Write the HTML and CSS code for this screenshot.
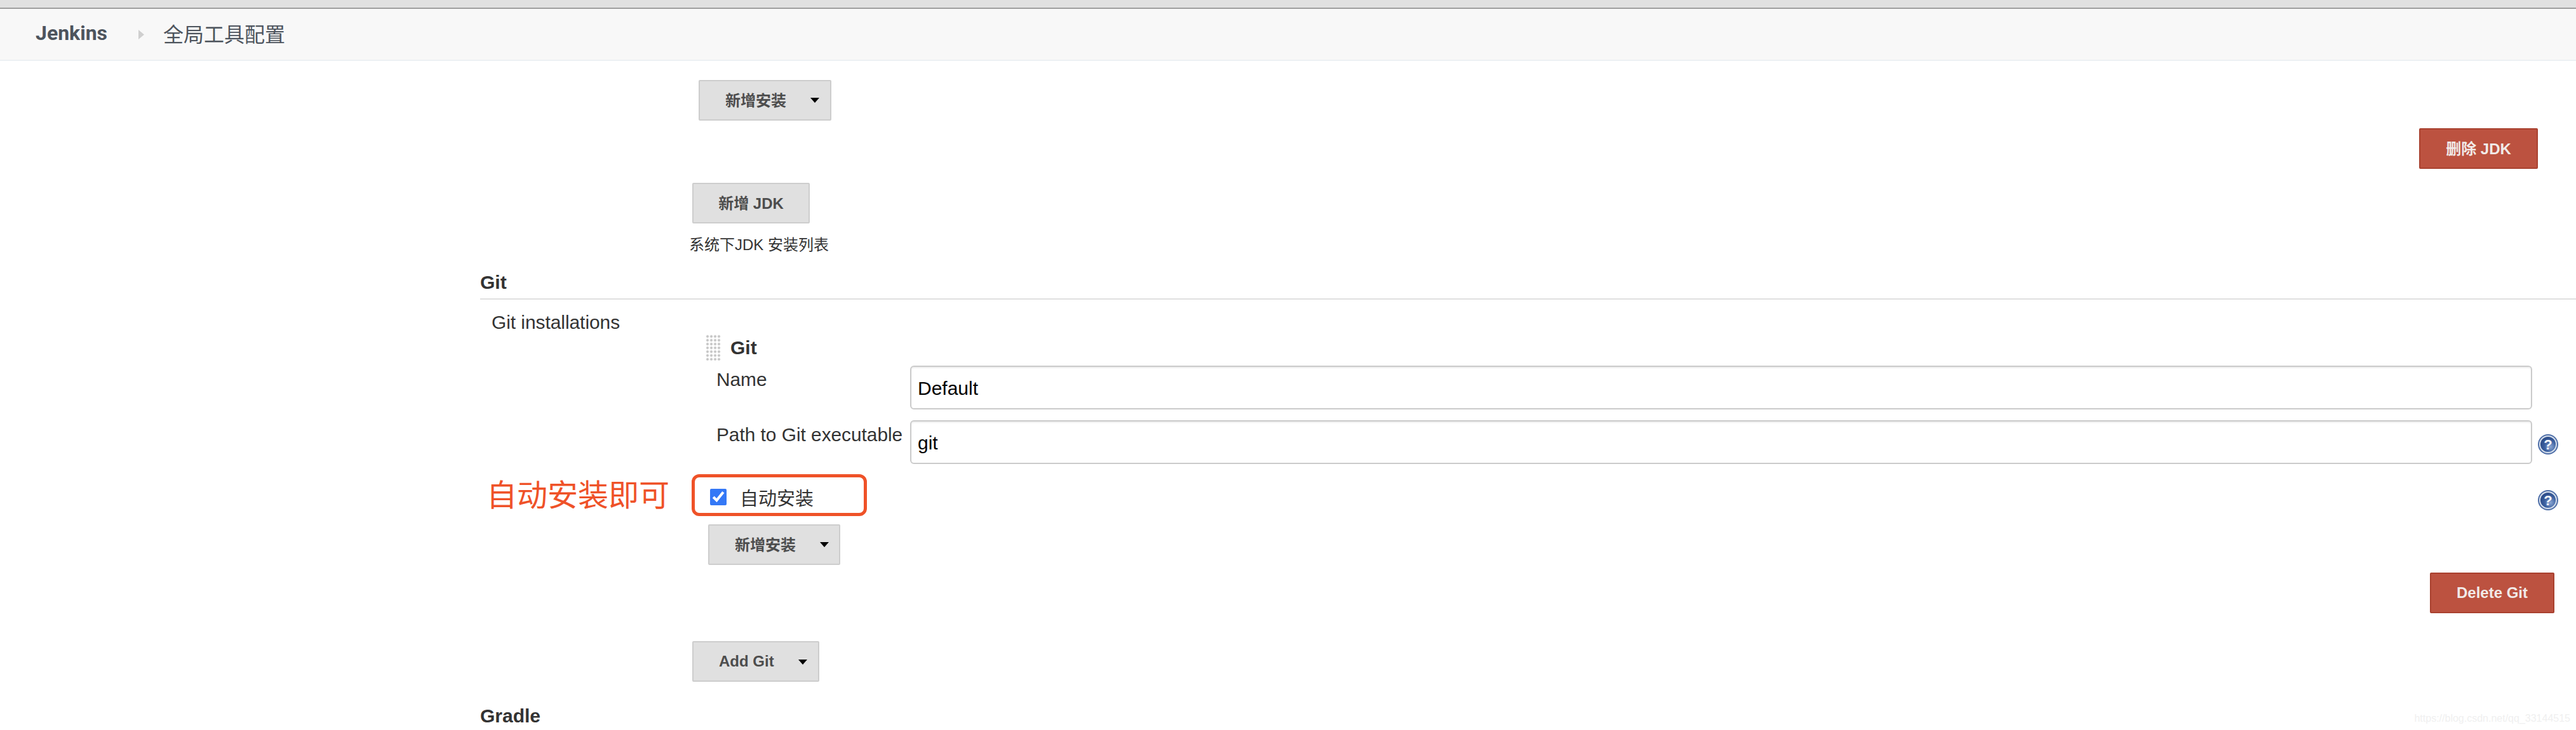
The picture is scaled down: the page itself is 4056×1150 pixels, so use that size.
FILE: index.html
```html
<!DOCTYPE html>
<html lang="zh">
<head>
<meta charset="utf-8">
<title>全局工具配置 [Jenkins]</title>
<link rel="stylesheet" href="styles.css">
</head>
<body>
<div class="topbar"></div>
<nav class="breadcrumb">
  <a class="crumb-root">Jenkins</a>
  <svg class="crumb-sep" width="9" height="15" viewBox="0 0 9 15"><path d="M0 0 L9 7.5 L0 15 Z" fill="#cfcfcf"/></svg>
  <a class="crumb-page">全局工具配置</a>
</nav>
<main class="content">
  <div class="add-install-jdk">
    <button class="btn btn-menu">新增安装<span class="caret"></span></button>
  </div>
  <div class="delete-row delete-row-jdk"><button class="btn btn-danger">删除 JDK</button></div>
  <div class="add-jdk"><button class="btn btn-plain">新增 JDK</button></div>
  <div class="jdk-desc">系统下JDK 安装列表</div>

  <h2 class="section-title section-git">Git</h2>
  <div class="field-label">Git installations</div>

  <div class="item-head">
    <span class="handle"></span>
    <span class="item-title">Git</span>
  </div>
  <div class="form-row row-name">
    <label class="row-label label-name">Name</label>
    <input class="text-input" type="text" value="Default">
    <span class="help-slot"></span>
  </div>
  <div class="form-row row-path">
    <label class="row-label label-path">Path to Git executable</label>
    <input class="text-input" type="text" value="git">
    <span class="help-slot">
      <svg class="help" width="32" height="32" viewBox="0 0 32 32">
        <defs>
          <radialGradient id="helpfill" cx="66%" cy="66%" r="72%">
            <stop offset="0" stop-color="#8ba6d3"/>
            <stop offset="0.55" stop-color="#3a5f9f"/>
            <stop offset="1" stop-color="#2b4a86"/>
          </radialGradient>
        </defs>
        <circle cx="16" cy="16" r="16" fill="#4f6fa8"/>
        <circle cx="16" cy="16" r="14" fill="#d5deeb"/>
        <circle cx="16" cy="16" r="12" fill="url(#helpfill)"/>
        <text class="help-mark" x="16" y="24" text-anchor="middle">?</text>
      </svg>
    </span>
  </div>
  <div class="auto-row">
    <span class="annotation">自动安装即可</span>
    <label class="auto-box">
      <input class="auto-check" type="checkbox" checked>
      <span class="auto-label">自动安装</span>
    </label>
    <svg class="help help-auto" width="32" height="32" viewBox="0 0 32 32">
      <circle cx="16" cy="16" r="16" fill="#4f6fa8"/>
      <circle cx="16" cy="16" r="14" fill="#d5deeb"/>
      <circle cx="16" cy="16" r="12" fill="url(#helpfill)"/>
      <text class="help-mark" x="16" y="24" text-anchor="middle">?</text>
    </svg>
  </div>
  <div class="add-install-git">
    <button class="btn btn-menu">新增安装<span class="caret"></span></button>
  </div>
  <div class="delete-row delete-row-git"><button class="btn btn-danger btn-latin">Delete Git</button></div>
  <div class="add-git"><button class="btn btn-menu btn-menu-git btn-latin">Add Git<span class="caret"></span></button></div>

  <h2 class="section-title section-gradle">Gradle</h2>
</main>
<div class="watermark">https://blog.csdn.net/qq_33144515</div>
</body>
</html>
```

FILE: styles.css
```css
* { box-sizing: border-box; }

html, body {
  margin: 0;
  height: 1150px;
  overflow: hidden;
  background: #fff;
}

body {
  position: relative;
  font-family: "Liberation Sans", "Noto Sans CJK SC", sans-serif;
  color: #333;
  font-size: 29.8px;
  line-height: 36px;
}

.topbar {
  height: 14px;
  background: #e1e1e1;
  border-bottom: 2px solid #9f9f9f;
}

.breadcrumb {
  height: 82px;
  display: flex;
  align-items: center;
  padding: 0 0 4px 56px;
  background: #f8f8f8;
  border-bottom: 2px solid #ecf0f3;
  color: #4d545d;
}

.crumb-root {
  font-family: Roboto, "Liberation Sans", sans-serif;
  font-weight: 700;
  font-size: 32px;
}

.crumb-sep {
  margin: 4px 30px 0 49px;
}

.crumb-page {
  font-family: "Noto Sans CJK SC", sans-serif;
  font-size: 32px;
}

.content {
  padding-left: 756px;
}

.btn {
  display: inline-flex;
  align-items: center;
  height: 64px;
  margin: 0;
  padding: 0 40px 3px;
  border: 2px solid #cdcdcd;
  border-radius: 2px;
  background: #e0e0e0;
  color: #4d4d4d;
  font-family: "Liberation Sans", "Noto Sans CJK SC", sans-serif;
  font-size: 24px;
  font-weight: 700;
}

.btn-menu {
  padding-right: 10px;
}

.btn-menu-git {
  padding-right: 8px;
}

.caret {
  width: 0;
  height: 0;
  margin: 2px 0 0 38px;
  border-style: solid;
  border-width: 8px 7.5px 0;
  border-color: #000 transparent transparent;
}

.btn-plain {
  width: 185px;
  justify-content: center;
  padding: 0 0 3px;
}

.btn-danger {
  justify-content: center;
  padding: 0 0 3px;
  background: #bc5240;
  border-color: #a9412f;
  color: #f1eae8;
}

.btn-latin {
  padding-bottom: 0;
}

.add-install-jdk {
  margin: 30px 0 0 344px;
}

.add-install-jdk .btn {
  width: 209px;
}

.delete-row {
  display: flex;
  justify-content: flex-end;
}

.delete-row-jdk {
  margin: 12px 60px 0 0;
}

.delete-row-jdk .btn {
  width: 187px;
}

.add-jdk {
  margin: 22px 0 0 334px;
}

.jdk-desc {
  margin: 16px 0 0 329px;
  font-size: 24px;
}

.section-title {
  margin: 0;
  font-size: 30px;
  font-weight: 700;
  line-height: 36px;
}

.section-git {
  margin-top: 21px;
  padding: 2px 0 9px;
  height: 47px;
  border-bottom: 2px solid #e0e0e0;
}

.field-label {
  margin: 18px 0 0 18px;
}

.item-head {
  display: flex;
  align-items: center;
  height: 41px;
  margin: 1px 0 0 355px;
}

.handle {
  width: 24px;
  height: 41px;
  background-image: radial-gradient(circle, #c4c4c4 1.3px, #f0f0f0 2.2px, transparent 3px);
  background-size: 6px 6px;
}

.item-title {
  margin-left: 15px;
  font-size: 30px;
  font-weight: 700;
}

.form-row {
  display: flex;
  align-items: flex-start;
  margin: 8px 28px 0 372px;
}

.row-path {
  margin-top: 17px;
}

.row-label {
  flex: 0 0 305px;
}

.label-name {
  padding-top: 4px;
}

.label-path {
  padding-top: 5px;
}

.text-input {
  flex: 1;
  min-width: 0;
  height: 69px;
  margin: 0;
  padding: 2px 10px 0;
  border: 2px solid #cbcbcb;
  border-radius: 6px;
  background: #fff;
  box-shadow: inset 0 2px 2px #eee;
  color: #000;
  font-family: "Liberation Sans", sans-serif;
  font-size: 30px;
}

.help-slot {
  flex: 0 0 32px;
  height: 32px;
  margin: 22px 0 0 9px;
}

.help {
  display: block;
}

.help-mark {
  fill: #fff;
  font-family: "Liberation Sans", sans-serif;
  font-size: 22px;
  font-weight: 700;
}

.auto-row {
  display: flex;
  align-items: flex-start;
  margin: 16px 28px 0 10px;
}

.annotation {
  width: 323px;
  margin-top: 5px;
  color: #ef5228;
  font-family: "Noto Sans CJK SC", sans-serif;
  font-size: 48px;
  font-weight: 400;
  line-height: 48px;
}

.auto-box {
  display: flex;
  align-items: flex-start;
  width: 276px;
  height: 66px;
  padding: 18px 0 0 24px;
  border: 5px solid #ef5228;
  border-radius: 12px;
}

.auto-check {
  width: 26px;
  height: 26px;
  margin: 0 21px 0 0;
  accent-color: #3478f6;
}

.auto-label {
  font-size: 29px;
  line-height: 32px;
}

.help-auto {
  margin: 25px 0 0 auto;
}

.add-install-git {
  margin: 13px 0 0 359px;
}

.add-install-git .btn {
  width: 208px;
}

.delete-row-git {
  margin: 12px 34px 0 0;
}

.delete-row-git .btn {
  width: 196px;
}

.add-git {
  margin: 44px 0 0 334px;
}

.add-git .btn {
  width: 200px;
}

.section-gradle {
  margin-top: 34px;
  padding-top: 2px;
  height: 38px;
}

.watermark {
  position: absolute;
  right: 9px;
  top: 1122px;
  color: #f0f0f0;
  font-size: 16px;
  line-height: 20px;
}
```
